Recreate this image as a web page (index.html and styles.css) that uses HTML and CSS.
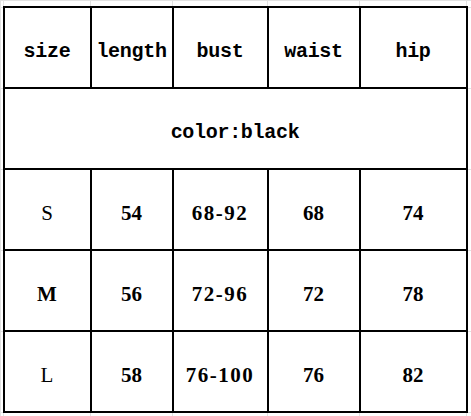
FILE: index.html
```html
<!DOCTYPE html>
<html>
<head>
<meta charset="utf-8">
<link rel="stylesheet" href="styles.css">
</head>
<body>
<table class="sheet">
  <colgroup>
    <col class="c-pad-l">
    <col class="c1"><col class="c2"><col class="c3"><col class="c4"><col class="c5">
    <col class="c-pad-r">
  </colgroup>
  <tr class="r-pad-t">
    <td class="g"></td><td class="g"></td><td class="g"></td><td class="g"></td><td class="g"></td><td class="g"></td><td class="g"></td>
  </tr>
  <tr class="row head">
    <td class="g"></td>
    <td class="cell">size</td>
    <td class="cell">length</td>
    <td class="cell">bust</td>
    <td class="cell">waist</td>
    <td class="cell">hip</td>
    <td class="g"></td>
  </tr>
  <tr class="row head">
    <td class="g"></td>
    <td class="cell" colspan="5">color:black</td>
    <td class="g"></td>
  </tr>
  <tr class="row data">
    <td class="g"></td>
    <td class="cell sz">S</td>
    <td class="cell">54</td>
    <td class="cell range">68-92</td>
    <td class="cell">68</td>
    <td class="cell">74</td>
    <td class="g"></td>
  </tr>
  <tr class="row data">
    <td class="g"></td>
    <td class="cell sz m">M</td>
    <td class="cell">56</td>
    <td class="cell range">72-96</td>
    <td class="cell">72</td>
    <td class="cell">78</td>
    <td class="g"></td>
  </tr>
  <tr class="row data">
    <td class="g"></td>
    <td class="cell sz">L</td>
    <td class="cell">58</td>
    <td class="cell range">76-100</td>
    <td class="cell">76</td>
    <td class="cell">82</td>
    <td class="g"></td>
  </tr>
  <tr class="r-pad-b">
    <td class="g"></td><td class="g"></td><td class="g"></td><td class="g"></td><td class="g"></td><td class="g"></td><td class="g"></td>
  </tr>
</table>
</body>
</html>
```

FILE: styles.css
```css
html, body {
  margin: 0;
  padding: 0;
  background: #fff;
  overflow: hidden;
}

.sheet {
  border-collapse: collapse;
  table-layout: fixed;
  width: 474px;
}

.c-pad-l { width: 3px; }
.c1 { width: 87px; }
.c2 { width: 82px; }
.c3 { width: 95px; }
.c4 { width: 92px; }
.c5 { width: 107px; }
.c-pad-r { width: 8px; }

.r-pad-t td { height: 5px; }
.r-pad-b td { height: 6px; }

.row td { height: 71px; }

.g {
  border: 1px solid #e2e2e2;
  padding: 0;
}

.cell {
  border: 2px solid #000;
  padding: 8px 0 0 0;
  text-align: center;
  vertical-align: middle;
  color: #000;
}

.head .cell {
  font-family: "Liberation Mono", "DejaVu Sans Mono", monospace;
  font-size: 20px;
  font-weight: bold;
  letter-spacing: -0.3px;
}

.data .cell {
  font-family: "Liberation Serif", "DejaVu Serif", serif;
  font-size: 21px;
  font-weight: bold;
}

.data .range {
  letter-spacing: 1.5px;
}

.data .sz {
  font-weight: normal;
}

.data .m {
  font-weight: bold;
}
```
